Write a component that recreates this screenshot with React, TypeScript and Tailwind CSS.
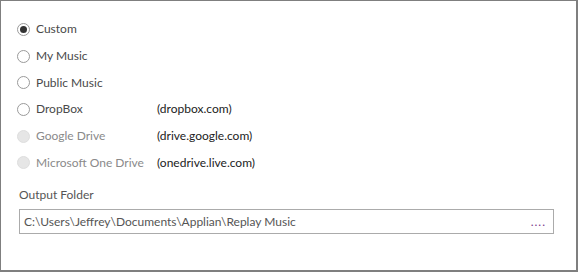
import React from 'react';

type Opt = { label: string; site?: string; disabled?: boolean };

const options: Opt[] = [
    { label: 'Custom' },
    { label: 'My Music' },
    { label: 'Public Music' },
    { label: 'DropBox', site: '(dropbox.com)' },
    { label: 'Google Drive', site: '(drive.google.com)', disabled: true },
    { label: 'Microsoft One Drive', site: '(onedrive.live.com)', disabled: true },
];

function Radio({ checked, disabled }: { checked: boolean; disabled?: boolean }) {
    if (disabled) {
        return <span className="w-[13px] h-[13px] rounded-full bg-[#e6e6e6] border border-[#dedede]" />;
    }
    return (
        <span className="w-[13px] h-[13px] rounded-full border border-[#9a9a9a] bg-white flex items-center justify-center">
            {checked && <span className="w-[7px] h-[7px] rounded-full bg-[#333]" />}
        </span>
    );
}

function App() {
    return (
        <div className="w-[578px] h-[272px] bg-white border border-[#7f7f7f] border-r-2 border-b-2 overflow-hidden font-['Lato',sans-serif] text-[12px]">
            <div className="pt-[15px] pl-[16px] flex flex-col">
                {options.map((o, i) => (
                    <div key={o.label} className="h-[26.7px] flex items-center">
                        <Radio checked={i === 0} disabled={o.disabled} />
                        <span className={`ml-[6px] w-[121px] ${o.disabled ? 'text-[#8a8a8a]' : 'text-[#4a4a4a]'}`}>
                            {o.label}
                        </span>
                        {o.site && <span className="text-[#222]">{o.site}</span>}
                    </div>
                ))}
            </div>
            <div className="pl-[18px] mt-[11px]">
                <div className="text-[#555] leading-[16px]">Output Folder</div>
                <div className="mt-[6px] w-[535px] h-[25px] border border-[#ababab] flex items-center justify-between pl-[4px] pr-[7px]">
                    <span className="text-[#555]">C:\Users\Jeffrey\Documents\Applian\Replay Music</span>
                    <span className="text-[#7a3c8a] tracking-[1px]">....</span>
                </div>
            </div>
        </div>
    );
}

export default App;
